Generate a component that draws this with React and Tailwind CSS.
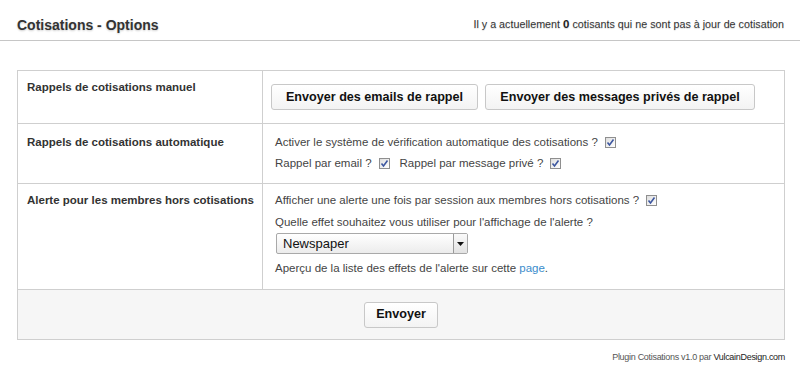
import React from 'react'

function Check() {
  return (
    <span className="inline-flex items-center justify-center w-[11px] h-[11px] border border-[#8f8f8f] bg-gradient-to-br from-[#dedede] to-white ml-[7px] align-middle">
      <svg width="9" height="9" viewBox="0 0 9 9">
        <path d="M1.5 4.5 L3.5 7 L7.5 1.5" fill="none" stroke="#3d57a0" strokeWidth="1.6" />
      </svg>
    </span>
  )
}

function Btn({ children, className = '' }) {
  return (
    <button className={`h-[26px] border border-[#c8c8c8] rounded-[3px] bg-gradient-to-b from-white to-[#f3f3f3] text-[12.6px] font-bold text-[#111] ${className}`}>
      {children}
    </button>
  )
}

export default function App() {
  return (
    <div className="w-[800px] h-[377px] bg-white text-[#444] font-['Liberation_Sans',Arial,sans-serif] text-[11.5px]">
      <div className="h-[41px] border-b border-[#c6c6c6] pt-[10px] px-[17px] flex items-center justify-between">
        <h1 className="text-[14px] font-bold text-[#333] [text-shadow:0_1px_2px_rgba(0,0,0,0.2)]">Cotisations - Options</h1>
        <p className="text-[10.75px] text-[#333] mr-[-1px] [text-shadow:0_1px_1px_rgba(0,0,0,0.15)]">
          Il y a actuellement <b className="text-[11.5px] text-[#222]">0</b> cotisants qui ne sont pas à jour de cotisation
        </p>
      </div>

      <div className="ml-[17px] mt-[29px] w-[768px] border border-[#cfcfcf]">
        <div className="flex h-[53px] border-b border-[#cfcfcf]">
          <div className="w-[245px] border-r border-[#cfcfcf] pl-[9px] pt-[7px] leading-[18px] font-bold text-[#333]">
            Rappels de cotisations manuel
          </div>
          <div className="flex-1 pl-[8px] pt-[13px] flex gap-[7px] items-start">
            <Btn className="w-[207px]">Envoyer des emails de rappel</Btn>
            <Btn className="w-[270px]">Envoyer des messages privés de rappel</Btn>
          </div>
        </div>

        <div className="flex h-[60px] border-b border-[#cfcfcf]">
          <div className="w-[245px] border-r border-[#cfcfcf] pl-[9px] pt-[9px] leading-[18px] font-bold text-[#333]">
            Rappels de cotisations automatique
          </div>
          <div className="flex-1 pl-[12px] pt-[9px] leading-[18px]">
            <div className="flex items-center">Activer le système de vérification automatique des cotisations ?<Check /></div>
            <div className="flex items-center mt-[3px]">
              Rappel par email ?<Check />
              <span className="ml-[10px]">Rappel par message privé ?</span><Check />
            </div>
          </div>
        </div>

        <div className="flex h-[106px] border-b border-[#cfcfcf]">
          <div className="w-[245px] border-r border-[#cfcfcf] pl-[9px] pt-[7px] leading-[18px] font-bold text-[#333]">
            Alerte pour les membres hors cotisations
          </div>
          <div className="flex-1 pl-[12px] pt-[7px] leading-[18px]">
            <div className="flex items-center">Afficher une alerte une fois par session aux membres hors cotisations ?<Check /></div>
            <div className="mt-[4px]">Quelle effet souhaitez vous utiliser pour l'affichage de l'alerte ?</div>
            <div className="mt-[2px] w-[192px] h-[21px] ml-[1px] border border-[#a9a9a9] rounded-[2px] bg-gradient-to-b from-white to-[#ececec] flex items-center">
              <span className="flex-1 pl-[6px] text-[13px] text-[#111]">Newspaper</span>
              <span className="w-[14px] h-[19px] border-l border-[#9a9a9a] bg-gradient-to-b from-[#fafafa] to-[#e2e2e2] flex items-center justify-center">
                <svg width="7" height="4" viewBox="0 0 7 4"><path d="M0 0 H7 L3.5 4 Z" fill="#111" /></svg>
              </span>
            </div>
            <div className="mt-[5px]">
              Aperçu de la liste des effets de l'alerte sur cette <a className="text-[#3a8ccc]">page</a>.
            </div>
          </div>
        </div>

        <div className="h-[49px] bg-[#f6f6f6] flex items-center justify-center">
          <Btn className="w-[74px] h-[25px]">Envoyer</Btn>
        </div>
      </div>

      <p className="w-[785px] text-right mt-[11px] text-[9px] text-[#555] tracking-[-0.3px]">
        Plugin Cotisations v1.0 par <span className="text-[#222]">VulcainDesign.com</span>
      </p>
    </div>
  )
}
